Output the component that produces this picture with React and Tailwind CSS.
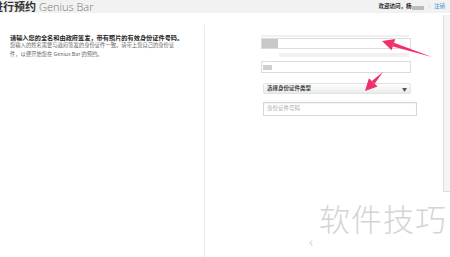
import React from 'react'

const FONT = { fontFamily: '"Noto Sans CJK SC", "Liberation Sans", sans-serif' }

function Arrow({ className, x1, y1, x2, y2 }) {
  // arrow drawn from tail (x1,y1) to head (x2,y2)
  const ang = Math.atan2(y2 - y1, x2 - x1)
  const L = 12, W = 6
  const bx = x2 - L * Math.cos(ang), by = y2 - L * Math.sin(ang)
  const px = -Math.sin(ang) * W, py = Math.cos(ang) * W
  const qx = -Math.sin(ang) * 2, qy = Math.cos(ang) * 2
  return (
    <svg className={className} width="450" height="257" viewBox="0 0 450 257">
      <polygon points={`${x1},${y1} ${bx + qx},${by + qy} ${bx - qx},${by - qy}`} fill="#f0306a" />
      <polygon points={`${x2},${y2} ${bx + px},${by + py} ${bx - px},${by - py}`} fill="#f0306a" />
    </svg>
  )
}

export default function App() {
  return (
    <div className="relative w-[450px] h-[257px] overflow-hidden bg-white" style={FONT}>
      {/* Header */}
      <div className="h-[13px] bg-[#f2f2f2] flex items-center">
        <div className="ml-[-8px] text-[11px] leading-none text-[#555] whitespace-nowrap">
          <span className="font-bold text-[#333]">进行预约</span>
          <span className="ml-[3px] font-light text-[#777]" style={{ fontFamily: '"Open Sans", sans-serif' }}>Genius Bar</span>
        </div>
        <div className="flex-1" />
        <div className="flex items-center mr-[5px] text-[5.5px] leading-none">
          <span className="font-bold text-[#222]">欢迎访问，杨</span>
          <span className="ml-[1px] w-[12px] h-[4px] bg-[#bbb] mt-[3px]" />
          <span className="mx-[4px] text-[#ccc]">|</span>
          <span className="text-[#3a8fd9]">注销</span>
        </div>
      </div>

      {/* Body */}
      <div className="flex mt-[12px] h-[232px]">
        <div className="w-[204px] pl-[10px] pt-[8px]">
          <p className="text-[6.2px] leading-[9px] font-bold text-[#222] whitespace-nowrap">
            请输入您的全名和由政府签发，带有照片的有效身份证件号码。
          </p>
          <p className="text-[5.3px] leading-[9px] text-[#666] mt-[-1px] whitespace-nowrap">
            您输入的姓名需要与政府签发的身份证件一致。请带上您自己的身份证<br />
            件，以便开始您在 Genius Bar 的预约。
          </p>
        </div>
        <div className="w-px bg-[#ececec]" />
        <div className="flex-1 pl-[56px] pt-[10px]">
          <div className="w-[150px] flex flex-col">
            <div className="h-[2px] w-[148px] bg-[#f0f0f0]" />
            <div className="mt-[1px] h-[11px] flex items-center border border-[#dcdcdc] bg-white">
              <span className="w-[16px] h-[9px] bg-[#c8c8c8]" />
            </div>
            <div className="mt-[4px] h-[4px] w-[130px] ml-[18px] bg-[#f0f0f0]" />
            <div className="mt-[4px] h-[12px] flex items-center border border-[#dcdcdc] bg-white">
              <span className="w-[9px] h-[5px] bg-[#cfcfcf] ml-[1px]" />
            </div>
            <div className="mt-[10px] ml-[2px] w-[148px] h-[11px] flex items-center justify-between px-[3px] bg-gradient-to-b from-[#ffffff] to-[#ebebeb] border border-[#e2e2e2] rounded-[2px]">
              <span className="text-[5.5px] leading-none font-bold text-[#444]">选择身份证件类型</span>
              <span className="text-[5px] leading-none text-[#555]">▼</span>
            </div>
            <div className="mt-[8px] ml-[2px] w-[154px] h-[14px] flex items-center px-[3px] border border-[#d6d6d6] bg-white shadow-[inset_0_1px_1px_rgba(0,0,0,0.06)]">
              <span className="text-[5.5px] leading-none text-[#aaa]">身份证件号码</span>
            </div>
          </div>
        </div>
        <div className="w-[7px] h-[177px] mt-[-10px] border-l border-[#dedede] bg-[#f4f4f4] border-b" />
      </div>

      {/* Annotation arrows */}
      <Arrow className="absolute left-0 top-0 pointer-events-none" x1={432} y1={57} x2={382} y2={41} />
      <Arrow className="absolute left-0 top-0 pointer-events-none" x1={383} y1={72} x2={365} y2={91} />

      {/* Watermark */}
      <div className="absolute left-[319px] top-[202px] text-[31px] leading-none tracking-[1px] text-[#d4d4d4]" style={{ fontFamily: '"Noto Sans CJK SC", sans-serif', fontWeight: 300 }}>
        软件技巧
      </div>
      <div className="absolute left-[309px] top-[234px] text-[14px] leading-none text-[#cfcfcf]">‹</div>
    </div>
  )
}
